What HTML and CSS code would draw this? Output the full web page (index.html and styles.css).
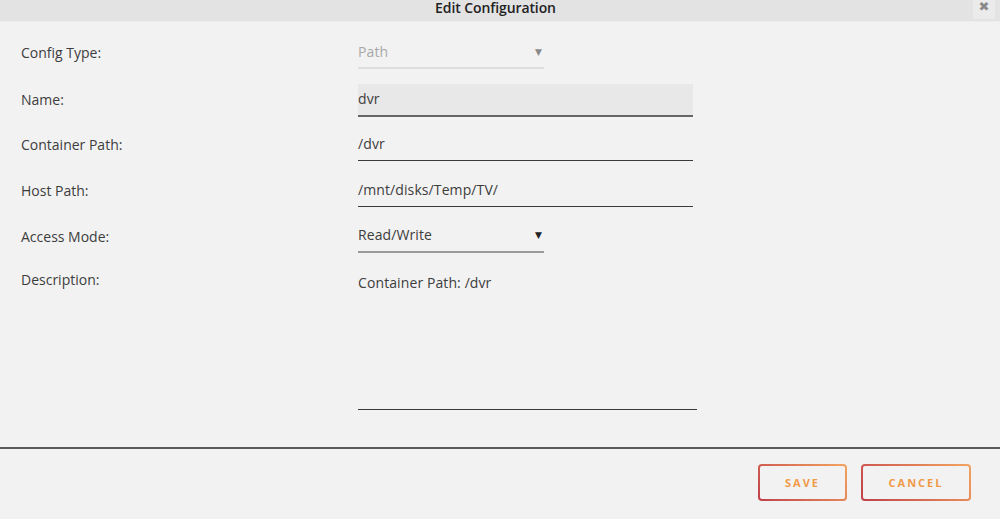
FILE: index.html
```html
<!DOCTYPE html>
<html lang="en">
<head>
<meta charset="utf-8">
<title>Edit Configuration</title>
<link rel="stylesheet" href="styles.css">
</head>
<body>
<div class="dialog">
  <header class="titlebar">
    <span class="title">Edit Configuration</span>
    <button class="close" type="button" aria-label="Close">&#x2716;</button>
  </header>

  <form class="form">
    <div class="row">
      <label class="label">Config Type:</label>
      <div class="field select disabled"><span class="value">Path</span><span class="caret">&#9660;</span></div>
    </div>
    <div class="row row-name">
      <label class="label">Name:</label>
      <div class="field text wide filled"><span class="value">dvr</span></div>
    </div>
    <div class="row row-after-name">
      <label class="label">Container Path:</label>
      <div class="field text wide"><span class="value">/dvr</span></div>
    </div>
    <div class="row">
      <label class="label">Host Path:</label>
      <div class="field text wide"><span class="value">/mnt/disks/Temp/TV/</span></div>
    </div>
    <div class="row">
      <label class="label">Access Mode:</label>
      <div class="field select"><span class="value">Read/Write</span><span class="caret">&#9660;</span></div>
    </div>
    <div class="row row-area">
      <label class="label">Description:</label>
      <div class="field area"><span class="value">Container Path: /dvr</span></div>
    </div>
  </form>

  <footer class="actions">
    <button class="btn" type="button">Save</button>
    <button class="btn btn-wide" type="button">Cancel</button>
  </footer>
</div>
</body>
</html>
```

FILE: styles.css
```css
* { box-sizing: border-box; }

html, body {
  margin: 0;
  padding: 0;
  background: #f2f2f2;
  font-family: "Open Sans", "DejaVu Sans", sans-serif;
  color: #3d3d3d;
}

.dialog {
  width: 1000px;
  height: 519px;
  display: flex;
  flex-direction: column;
}

/* title bar */
.titlebar {
  height: 22px;
  background: #e3e3e3;
  border-bottom: 1px solid #ececec;
  display: flex;
  align-items: flex-start;
  justify-content: center;
  padding-right: 9px;
  position: relative;
}

.title {
  font-size: 14px;
  line-height: 15px;
  font-weight: 600;
  color: #222;
  letter-spacing: -0.1px;
}

.close {
  position: absolute;
  top: 0;
  right: 5px;
  width: 22px;
  height: 19px;
  border: none;
  background: #ebebeb;
  color: #8a8a8a;
  font-size: 13px;
  line-height: 13px;
  padding: 0 0 7px;
  font-family: "DejaVu Sans", sans-serif;
  display: flex;
  align-items: center;
  justify-content: center;
}

/* form rows */
.form {
  padding: 15px 0 0 21px;
  display: flex;
  flex-direction: column;
  gap: 14px;
}

.row {
  display: flex;
  align-items: flex-start;
  height: 32px;
}

.row-name { height: 33px; margin-top: 1px; }
.row-after-name { margin-top: -2px; }

.label {
  width: 337px;
  font-size: 14px;
  line-height: 32px;
  color: #3d3d3d;
}

.field {
  height: 32px;
  display: flex;
  align-items: center;
  font-size: 14px;
  letter-spacing: 0.1px;
  border-bottom: 1px solid #3a3a3a;
  padding-bottom: 2px;
}

.wide { width: 335px; }

.filled {
  height: 33px;
  background: #e8e8e8;
  border-bottom: 2px solid #666;
  padding-bottom: 3px;
}

.select {
  width: 186px;
  justify-content: space-between;
  border-bottom: 2px solid #9a9a9a;
  padding-bottom: 3px;
}

.select.disabled {
  color: #a8a8a8;
  border-bottom: 2px solid #dedede;
  padding-bottom: 1px;
}

.caret {
  font-size: 9px;
  margin-right: 2px;
  color: #222;
}

.disabled .caret { color: #8a8a8a; }

.row-area { height: 143px; }

.area {
  width: 339px;
  height: 143px;
  align-items: flex-start;
  padding-top: 6px;
  border-bottom: 1px solid #3a3a3a;
}

.row-area .label { line-height: 26px; }

/* footer */
.actions {
  margin-top: 37px;
  border-top: 2px solid #5a5a5a;
  display: flex;
  justify-content: flex-end;
  gap: 14px;
  padding: 15px 29px 0 0;
}

.btn {
  width: 89px;
  height: 37px;
  border: 2px solid transparent;
  border-radius: 4px;
  background:
    linear-gradient(#f2f2f2, #f2f2f2) padding-box,
    linear-gradient(45deg, #c0404a, #f3a560) border-box;
  color: #f09a48;
  font-family: "Open Sans", sans-serif;
  font-weight: 700;
  font-size: 11px;
  letter-spacing: 2px;
  text-transform: uppercase;
  padding: 0;
}

.btn-wide { width: 110px; }
```
